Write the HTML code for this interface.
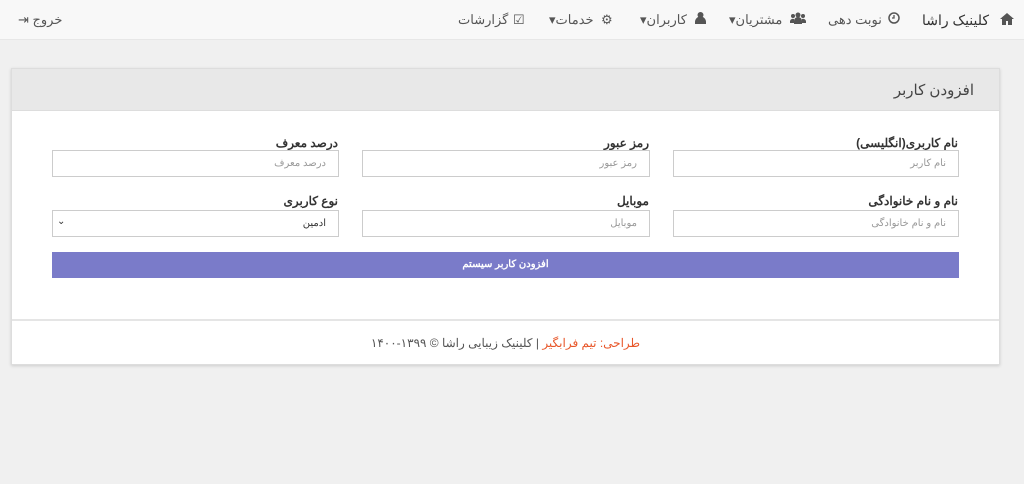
<!DOCTYPE html>
<html><head><meta charset="utf-8"><style>
*{box-sizing:border-box;margin:0;padding:0}
body{width:1024px;height:484px;background:#f0f0f0;font-family:"Liberation Sans","Noto Sans CJK SC",sans-serif;position:relative;overflow:hidden;color:#333}
.nav{position:absolute;left:0;top:0;width:1024px;height:40px;background:#f8f8f8;border-bottom:1px solid #e7e7e7}
.nav span{position:absolute;top:12px;font-size:13px;color:#555;white-space:nowrap;direction:rtl}
.ic{position:absolute;top:12px;font-size:13px;color:#666}
.panel{position:absolute;left:11px;top:68px;width:989px;height:297px;background:#fff;border:1px solid #ddd;box-shadow:0 1px 3px rgba(0,0,0,.15)}
.ph{height:42px;background:#e8e8e8;border-bottom:1px solid #ddd;direction:rtl;padding:12px 25px 0 0;font-size:15px;color:#444}
.lbl{position:absolute;font-size:12px;font-weight:bold;color:#333;direction:rtl;text-align:right}
.inp{position:absolute;height:27px;border:1px solid #ccc;background:#fff;direction:rtl;font-size:10px;color:#999;padding:7px 12px 0 0}
.btn{position:absolute;left:40px;top:183px;width:907px;height:26px;background:#7a7bc9;color:#fff;font-size:10px;font-weight:bold;text-align:center;line-height:26px;direction:rtl}
.foot{position:absolute;left:0;top:250px;width:987px;height:46px;border-top:2px solid #e5e5e5;text-align:center;font-size:12px;color:#555;line-height:44px;direction:rtl}
</style></head><body>
<div class="nav">
<svg style="position:absolute;left:1000px;top:13px" width="14" height="12" viewBox="0 0 14 12"><path d="M7 0L0 6h2v6h4V8h2v4h4V6h2z" fill="#555"/></svg>
<span style="left:922px;font-size:14px;color:#333">کلینیک راشا</span>
<svg style="position:absolute;left:888px;top:12px" width="12" height="12" viewBox="0 0 12 12"><circle cx="6" cy="6" r="5" fill="none" stroke="#555" stroke-width="1.5"/><path d="M6 3v3H4" fill="none" stroke="#555" stroke-width="1.3"/></svg>
<span style="left:828px">نوبت دهی</span>
<svg style="position:absolute;left:790px;top:12px" width="16" height="12" viewBox="0 0 16 12"><circle cx="8" cy="3" r="2.5" fill="#555"/><circle cx="3" cy="4" r="2" fill="#555"/><circle cx="13" cy="4" r="2" fill="#555"/><path d="M4 12v-3a4 4 0 0 1 8 0v3z M0 11v-2a3 3 0 0 1 4-2v4z M16 11v-2a3 3 0 0 0-4-2v4z" fill="#555"/></svg>
<span style="left:729px">مشتریان▾</span>
<svg style="position:absolute;left:695px;top:12px" width="11" height="12" viewBox="0 0 11 12"><circle cx="5.5" cy="3" r="3" fill="#555"/><path d="M0 12v-2a5 5 0 0 1 11 0v2z" fill="#555"/></svg>
<span style="left:640px">کاربران▾</span>
<span class="ic" style="left:601px;color:#555">⚙</span>
<span style="left:549px">خدمات▾</span>
<span class="ic" style="left:513px;color:#555">☑</span>
<span style="left:458px">گزارشات</span>
<span style="left:18px;direction:ltr">⇥ خروج</span>
</div>
<div class="panel">
<div class="ph">افزودن کاربر</div>
<div class="lbl" style="right:41px;top:67px">نام کاربری(انگلیسی)</div>
<div class="lbl" style="right:350px;top:67px">رمز عبور</div>
<div class="lbl" style="right:661px;top:67px">درصد معرف</div>
<div class="inp" style="left:661px;top:81px;width:286px">نام کاربر</div>
<div class="inp" style="left:350px;top:81px;width:288px">رمز عبور</div>
<div class="inp" style="left:40px;top:81px;width:287px">درصد معرف</div>
<div class="lbl" style="right:41px;top:125px">نام و نام خانوادگی</div>
<div class="lbl" style="right:350px;top:125px">موبایل</div>
<div class="lbl" style="right:661px;top:125px">نوع کاربری</div>
<div class="inp" style="left:661px;top:141px;width:286px">نام و نام خانوادگی</div>
<div class="inp" style="left:350px;top:141px;width:288px">موبایل</div>
<div class="inp" style="left:40px;top:141px;width:287px;color:#333">ادمین<span style="position:absolute;left:4px;top:5px;font-size:10px">⌄</span></div>
<div class="btn">افزودن کاربر سیستم</div>
<div class="foot"><span style="color:#e8572a">طراحی: تیم فرابگیر</span> | کلینیک زیبایی راشا © ۱۳۹۹-۱۴۰۰</div>
</div>
</body></html>
